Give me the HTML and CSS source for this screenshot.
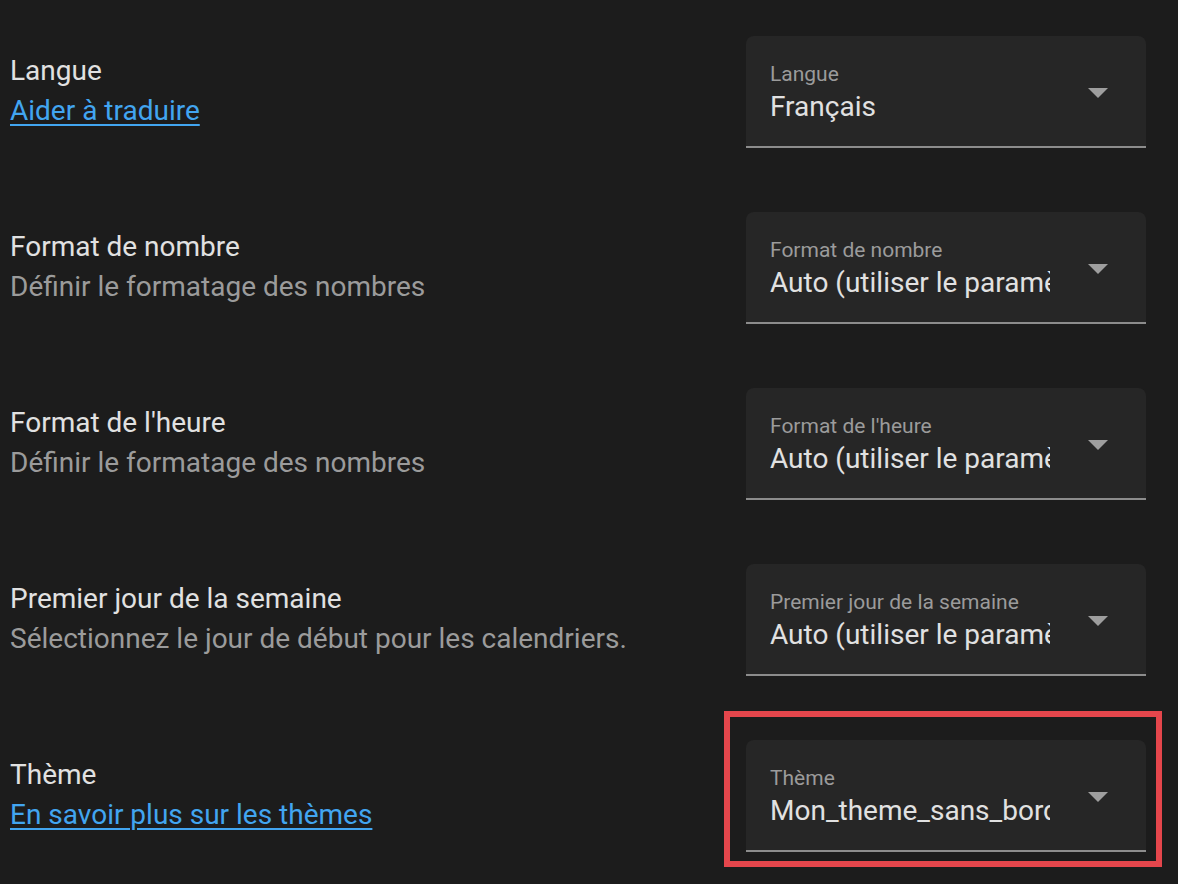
FILE: index.html
```html
<!DOCTYPE html>
<html lang="fr">
<head>
    <meta charset="UTF-8">
    <title>Profil</title>
    <link rel="stylesheet" href="styles.css">
</head>
<body>
    <div class="settings">
        <div class="row">
            <div class="info">
                <div class="title">Langue</div>
                <a class="link" href="#">Aider à traduire</a>
            </div>
            <div class="select">
                <div class="field">
                    <div class="label">Langue</div>
                    <div class="value">Français</div>
                </div>
                <span class="arrow"></span>
            </div>
        </div>

        <div class="row">
            <div class="info">
                <div class="title">Format de nombre</div>
                <div class="desc">Définir le formatage des nombres</div>
            </div>
            <div class="select">
                <div class="field">
                    <div class="label">Format de nombre</div>
                    <div class="value">Auto (utiliser le paramètre de langue)</div>
                </div>
                <span class="arrow"></span>
            </div>
        </div>

        <div class="row">
            <div class="info">
                <div class="title">Format de l'heure</div>
                <div class="desc">Définir le formatage des nombres</div>
            </div>
            <div class="select">
                <div class="field">
                    <div class="label">Format de l'heure</div>
                    <div class="value">Auto (utiliser le paramètre de langue)</div>
                </div>
                <span class="arrow"></span>
            </div>
        </div>

        <div class="row">
            <div class="info">
                <div class="title">Premier jour de la semaine</div>
                <div class="desc">Sélectionnez le jour de début pour les calendriers.</div>
            </div>
            <div class="select">
                <div class="field">
                    <div class="label">Premier jour de la semaine</div>
                    <div class="value">Auto (utiliser le paramètre de langue)</div>
                </div>
                <span class="arrow"></span>
            </div>
        </div>

        <div class="row">
            <div class="info">
                <div class="title">Thème</div>
                <a class="link" href="#">En savoir plus sur les thèmes</a>
            </div>
            <div class="select highlighted">
                <div class="field">
                    <div class="label">Thème</div>
                    <div class="value">Mon_theme_sans_bordure</div>
                </div>
                <span class="arrow"></span>
            </div>
        </div>
    </div>
</body>
</html>
```

FILE: styles.css
```css
body{
    margin: 0;
    background: #1c1c1c;
    font-family: Roboto, "Noto Sans", sans-serif;
    color: #e1e1e1;
}
.settings{
    padding: 4px 32px 0 10px;
}
.row{
    height: 176px;
    display: flex;
    align-items: center;
    justify-content: space-between;
}
.info{
    font-size: 28px;
    line-height: 40px;
    margin-top: -2px;
}
.title{
    color: #e1e1e1;
}
.desc{
    color: #9b9b9b;
}
.link{
    display: block;
    color: #42a5f0;
    text-decoration: underline;
    text-underline-offset: 4px;
    text-decoration-thickness: 2px;
}
.select{
    position: relative;
    width: 400px;
    height: 110px;
    box-sizing: content-box;
    background: #262626;
    border-radius: 8px 8px 0 0;
    border-bottom: 2px solid #8c8c8c;
    display: flex;
    align-items: flex-start;
}
.field{
    width: 280px;
    padding: 26px 0 0 24px;
    overflow: hidden;
}
.label{
    font-size: 21px;
    line-height: 24px;
    color: #9b9b9b;
    white-space: nowrap;
}
.value{
    margin-top: 5px;
    font-size: 28px;
    line-height: 32px;
    color: #e1e1e1;
    white-space: nowrap;
    overflow: hidden;
}
.arrow{
    margin: 52px 0 0 38px;
    width: 0;
    height: 0;
    border-left: 10px solid transparent;
    border-right: 10px solid transparent;
    border-top: 10px solid #9e9e9e;
}
.highlighted::after{
    content: "";
    position: absolute;
    left: -22px;
    top: -29px;
    right: -16px;
    bottom: -17px;
    border: 6px solid #e5464c;
    pointer-events: none;
}
```
